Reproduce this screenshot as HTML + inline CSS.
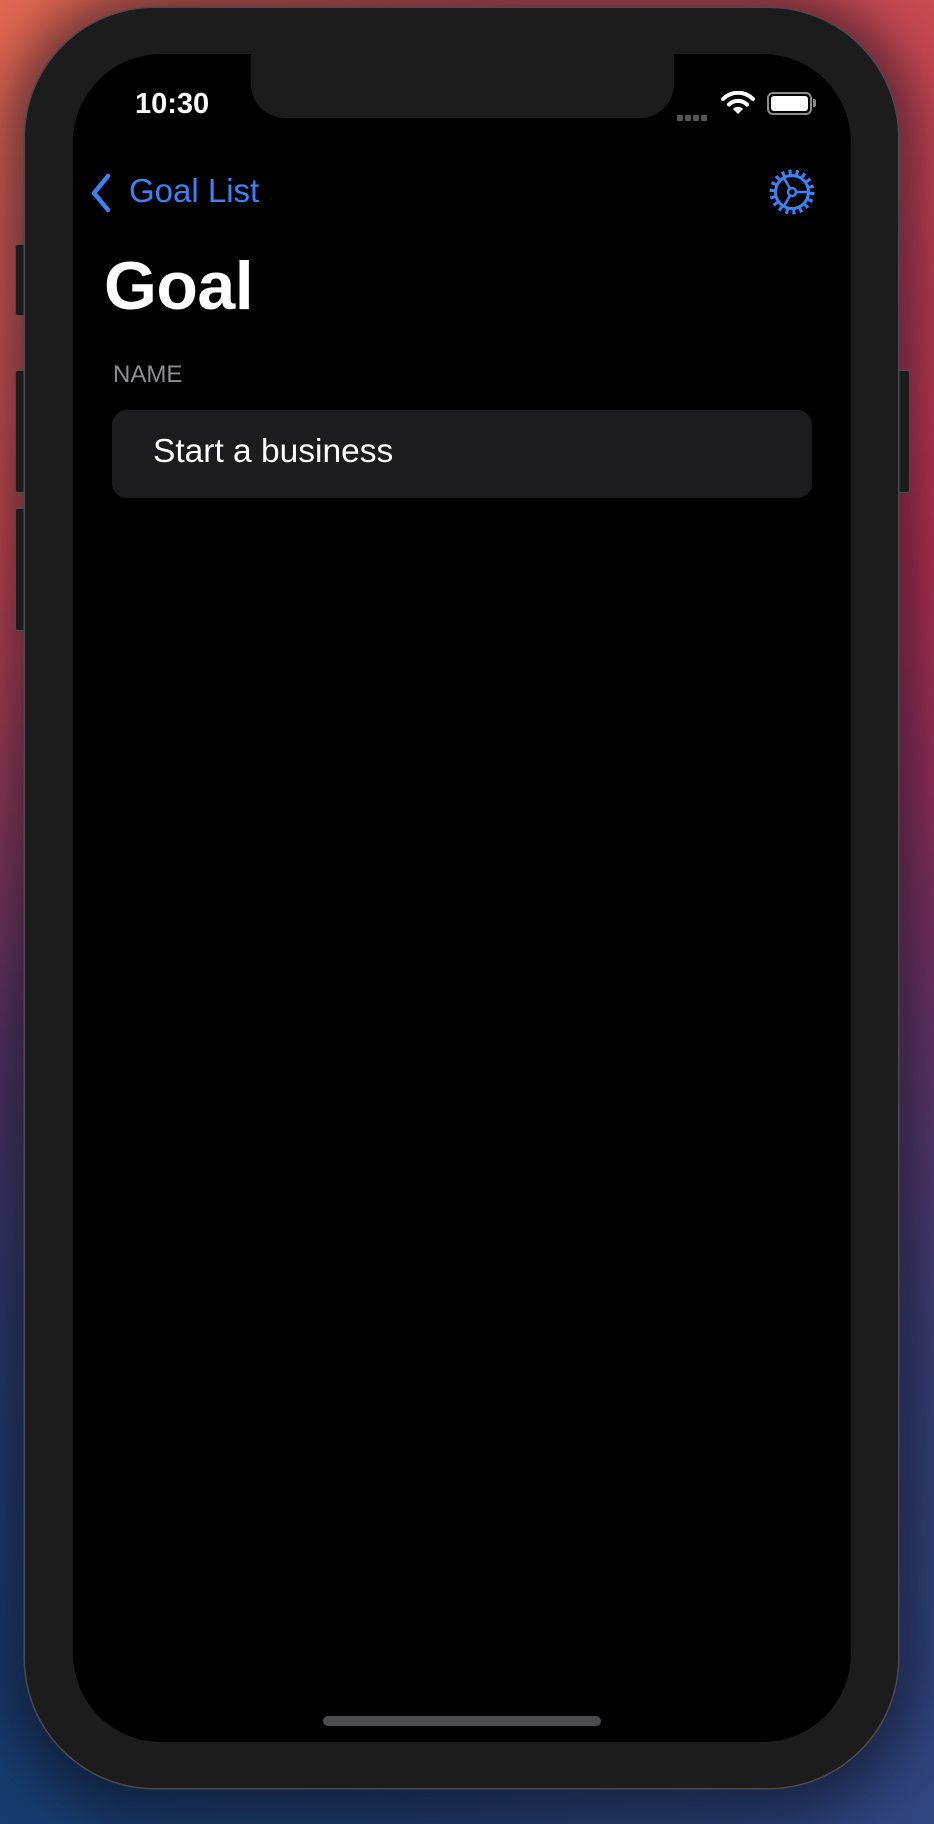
<!DOCTYPE html>
<html><head><meta charset="utf-8"><style>
html,body{margin:0;padding:0;}
body{width:934px;height:1824px;position:relative;overflow:hidden;font-family:"Liberation Sans",sans-serif;
background:linear-gradient(180deg,#c84a52 0%,#b83050 30%,#7a3060 55%,#3c3a68 78%,#253a68 100%);}
.bgl{position:absolute;inset:0;background:radial-gradient(ellipse at 0% 0%,rgba(230,110,80,.8),rgba(0,0,0,0) 40%),radial-gradient(ellipse at 0% 100%,rgba(20,60,110,.9),rgba(0,0,0,0) 45%),radial-gradient(ellipse at 100% 100%,rgba(50,70,130,.9),rgba(0,0,0,0) 40%);}
.shadow{position:absolute;left:5px;top:-10px;width:914px;height:1830px;border-radius:150px;background:rgba(10,15,30,.55);filter:blur(25px);}
.phone{position:absolute;left:25px;top:8px;width:873px;height:1780px;border-radius:130px;background:#1c1c1c;box-shadow:0 0 0 1.5px #4a4a50;}
.btn{position:absolute;background:#1c1c1c;border:1px solid #4a4a50;border-radius:3px;}
.screen{position:absolute;left:73px;top:54px;width:778px;height:1688px;border-radius:88px;background:#000;overflow:hidden;}
.notch{position:absolute;left:178px;top:-2px;width:423px;height:66px;background:#1c1c1c;border-radius:0 0 34px 34px;}
.time{position:absolute;left:62px;top:34px;color:#fff;font-size:29px;font-weight:bold;}
.blue{color:#3a82f7;}
</style></head><body>
<div class="bgl"></div>
<div class="shadow"></div>
<div class="btn" style="left:15px;top:244px;width:12px;height:70px"></div>
<div class="btn" style="left:15px;top:370px;width:12px;height:121px"></div>
<div class="btn" style="left:15px;top:508px;width:12px;height:121px"></div>
<div class="btn" style="left:896px;top:370px;width:12px;height:121px"></div>
<div class="phone"></div>
<div class="screen">
  <div class="notch"></div>
  <div class="time">10:30</div>
  <div style="position:absolute;left:604px;top:54px;">
    <span style="display:inline-block;width:6px;height:6px;background:#555;border-radius:1px;margin-right:2px"></span><span style="display:inline-block;width:6px;height:6px;background:#555;border-radius:1px;margin-right:2px"></span><span style="display:inline-block;width:6px;height:6px;background:#555;border-radius:1px;margin-right:2px"></span><span style="display:inline-block;width:6px;height:6px;background:#555;border-radius:1px"></span>
  </div>
  <svg style="position:absolute;left:648px;top:37px" width="34" height="24" viewBox="0 0 34 24">
    <path d="M2 8 A21 21 0 0 1 32 8" stroke="#fff" stroke-width="4" fill="none" stroke-linecap="round"/>
    <path d="M8 13.5 A13 13 0 0 1 26 13.5" stroke="#fff" stroke-width="4" fill="none" stroke-linecap="round"/>
    <path d="M17 23 L12 18 A7 7 0 0 1 22 18 Z" fill="#fff"/>
  </svg>
  <div style="position:absolute;left:694px;top:38px;width:41px;height:19px;border:2px solid #fff;border-radius:6px;opacity:.55"></div>
  <div style="position:absolute;left:698px;top:42px;width:37px;height:15px;background:#fff;border-radius:3px"></div>
  <div style="position:absolute;left:740px;top:45px;width:3px;height:8px;background:#888;border-radius:0 2px 2px 0"></div>

  <svg style="position:absolute;left:16px;top:118px" width="24" height="42" viewBox="0 0 24 42"><path d="M19 4 L5 21 L19 38" stroke="#3a82f7" stroke-width="4.5" fill="none" stroke-linecap="round" stroke-linejoin="round"/></svg>
  <div class="blue" style="position:absolute;left:56px;top:118px;font-size:33px;">Goal List</div>
  <svg style="position:absolute;left:692px;top:111px" width="54" height="54" viewBox="-27 -27 54 54">
    <circle r="19.5" stroke="#3a82f7" stroke-width="6" fill="none" stroke-dasharray="3 3.8"/>
    <circle r="16.5" stroke="#3a82f7" stroke-width="3" fill="none"/>
    <circle r="4" stroke="#3a82f7" stroke-width="2.5" fill="none"/>
    <path d="M4 0 L16 0 M-2 -3.5 L-8 -14 M-2 3.5 L-8 14" stroke="#3a82f7" stroke-width="2.5"/>
  </svg>
  <div style="position:absolute;left:31px;top:193px;color:#fff;font-size:68px;font-weight:bold;letter-spacing:-0.5px">Goal</div>
  <div style="position:absolute;left:40px;top:307px;color:#8d8d93;font-size:24px;">NAME</div>
  <div style="position:absolute;left:39px;top:356px;width:700px;height:88px;background:#1c1c1e;border-radius:15px;"></div>
  <div style="position:absolute;left:80px;top:379px;color:#fff;font-size:33.5px;">Start a business</div>
  <div style="position:absolute;left:250px;top:1662px;width:278px;height:10px;background:#4d4d4f;border-radius:5px"></div>
</div>
</body></html>
